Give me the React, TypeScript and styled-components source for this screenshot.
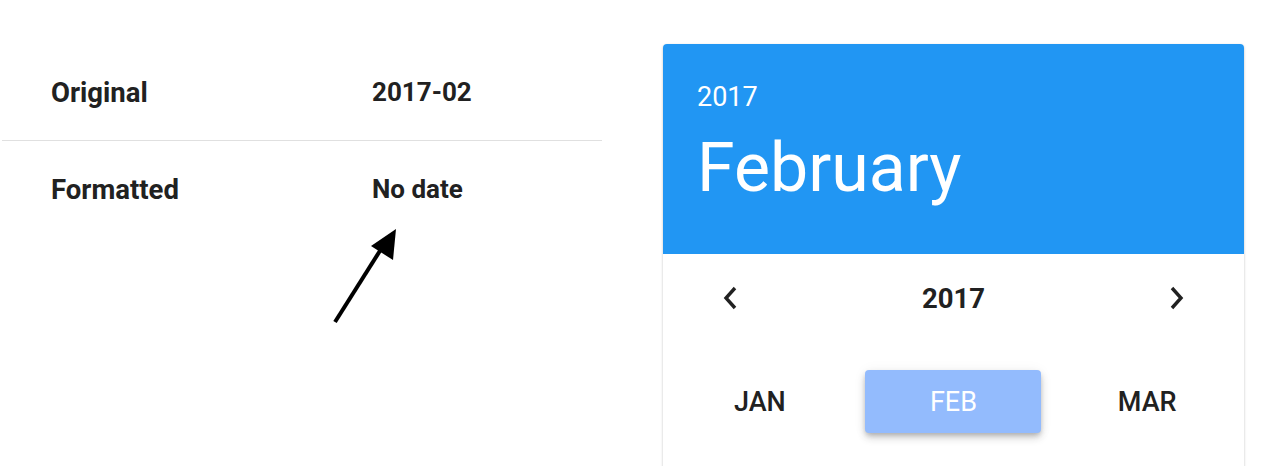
import React from "react";
import styled, { createGlobalStyle } from "styled-components";

const Global = createGlobalStyle`
  html, body { margin: 0; padding: 0; background: #ffffff; }
  body { font-family: Roboto, "Noto Sans", sans-serif; color: rgba(0,0,0,0.87); }
  * { box-sizing: border-box; }
`;

const Page = styled.div`
  display: flex;
  align-items: flex-start;
  padding-top: 44px;
  width: 1282px;
  height: 466px;
  overflow: hidden;
`;

const Left = styled.div`
  position: relative;
  width: 602px;
  flex: none;
`;

const Table = styled.div`
  display: flex;
  flex-direction: column;
  margin-left: 2px;
`;

const Row = styled.div<{ $divider?: boolean }>`
  display: grid;
  grid-template-columns: 321px 1fr;
  align-items: center;
  height: ${(p) => (p.$divider ? 97 : 96)}px;
  padding-left: 49px;
  border-bottom: ${(p) => (p.$divider ? "1px solid #e0e0e0" : "none")};
  font-weight: 700;
  color: #212121;
`;

const Label = styled.span`
  font-size: 27.5px;
`;

const Value = styled.span`
  font-size: 26px;
`;

const Arrow = styled.svg`
  position: absolute;
  left: 325px;
  top: 180px;
  width: 80px;
  height: 105px;
`;

const Card = styled.div`
  margin-left: 61px;
  width: 581px;
  height: 440px;
  flex: none;
  border-radius: 4px;
  overflow: hidden;
  background: #fff;
  box-shadow: 0 1px 3px rgba(0,0,0,0.2), 0 1px 1px rgba(0,0,0,0.14), 0 2px 1px -1px rgba(0,0,0,0.12);
`;

const Header = styled.div`
  height: 210px;
  background: #2196f3;
  color: #fff;
  padding: 38px 34px 0;
  display: flex;
  flex-direction: column;
`;

const HeaderYear = styled.div`
  font-size: 27px;
  line-height: 30px;
  font-weight: 400;
`;

const HeaderMonth = styled.div`
  font-size: 68px;
  line-height: 80px;
  font-weight: 400;
  margin-top: 16px;
`;

const Nav = styled.div`
  display: flex;
  align-items: center;
  justify-content: space-between;
  height: 44px;
  margin-top: 22px;
  padding: 0 56px 0 56px;
`;

const NavButton = styled.button`
  border: none;
  background: transparent;
  padding: 0;
  width: 24px;
  height: 24px;
  display: flex;
  align-items: center;
  justify-content: center;
  color: #212121;
`;

const NavYear = styled.div`
  font-size: 27.5px;
  font-weight: 700;
  color: #212121;
`;

const Months = styled.div`
  display: grid;
  grid-template-columns: repeat(3, 1fr);
  margin-top: 50px;
`;

const MonthCell = styled.div`
  display: flex;
  justify-content: center;
`;

const MonthButton = styled.button<{ $selected?: boolean }>`
  width: 176px;
  height: 63px;
  border: none;
  border-radius: 4px;
  font-family: Roboto, "Noto Sans", sans-serif;
  font-size: 27px;
  font-weight: ${(p) => (p.$selected ? 400 : 500)};
  color: ${(p) => (p.$selected ? "#ffffff" : "#212121")};
  background: ${(p) => (p.$selected ? "#93bbfd" : "transparent")};
  box-shadow: ${(p) =>
    p.$selected
      ? "0 3px 5px -1px rgba(0,0,0,0.2), 0 5px 8px 0 rgba(0,0,0,0.14), 0 1px 14px 0 rgba(0,0,0,0.06)"
      : "none"};
`;

const Chevron = ({ dir }: { dir: "left" | "right" }) => (
  <svg width="18" height="24" viewBox="0 0 18 24" fill="none">
    <path
      d={dir === "left" ? "M13 2 L4 12 L13 22" : "M5 2 L14 12 L5 22"}
      stroke="#212121"
      strokeWidth="3.4"
      strokeLinecap="butt"
      strokeLinejoin="miter"
    />
  </svg>
);

export default function App() {
  return (
    <>
      <Global />
      <Page>
        <Left>
          <Table>
            <Row $divider>
              <Label>Original</Label>
              <Value>2017-02</Value>
            </Row>
            <Row>
              <Label>Formatted</Label>
              <Value>No date</Value>
            </Row>
          </Table>
          <Arrow viewBox="0 0 80 105">
            <line x1="10" y1="98" x2="58" y2="22" stroke="#000" strokeWidth="4" />
            <polygon points="71,5 68,36 46,22" fill="#000" />
          </Arrow>
        </Left>
        <Card>
          <Header>
            <HeaderYear>2017</HeaderYear>
            <HeaderMonth>February</HeaderMonth>
          </Header>
          <Nav>
            <NavButton aria-label="previous">
              <Chevron dir="left" />
            </NavButton>
            <NavYear>2017</NavYear>
            <NavButton aria-label="next">
              <Chevron dir="right" />
            </NavButton>
          </Nav>
          <Months>
            <MonthCell>
              <MonthButton>JAN</MonthButton>
            </MonthCell>
            <MonthCell>
              <MonthButton $selected>FEB</MonthButton>
            </MonthCell>
            <MonthCell>
              <MonthButton>MAR</MonthButton>
            </MonthCell>
          </Months>
        </Card>
      </Page>
    </>
  );
}
